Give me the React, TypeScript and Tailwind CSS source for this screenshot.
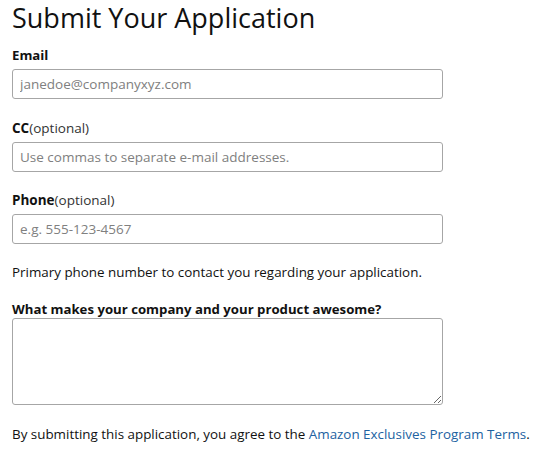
import React from "react";

const font = { fontFamily: '"Open Sans", "Liberation Sans", sans-serif' };

export default function App() {
  return (
    <div className="bg-white w-[543px] h-[452px] pl-[12px] text-[#111]" style={font}>
      <h1 className="text-[27px] leading-[36px] font-normal text-[#111] m-0">Submit Your Application</h1>
      <div className="w-[431px]">
        <label className="block mt-[9px] text-[13.2px] leading-[20px] font-bold">Email</label>
        <input
          className="block mt-[4px] w-full h-[30px] border border-[#a6a6a6] rounded-[3px] px-[7px] text-[13.5px] placeholder:text-[#808080] outline-none"
          placeholder="janedoe@companyxyz.com"
        />
        <label className="block mt-[19px] text-[13.5px] leading-[20px]">
          <span className="font-bold">CC</span>
          <span className="text-[#333]">(optional)</span>
        </label>
        <input
          className="block mt-[4px] w-full h-[30px] border border-[#a6a6a6] rounded-[3px] px-[7px] text-[13.5px] placeholder:text-[#808080] outline-none"
          placeholder="Use commas to separate e-mail addresses."
        />
        <label className="block mt-[18px] text-[13.5px] leading-[20px]">
          <span className="font-bold">Phone</span>
          <span className="text-[#333]">(optional)</span>
        </label>
        <input
          className="block mt-[4px] w-full h-[30px] border border-[#a6a6a6] rounded-[3px] px-[7px] text-[13.5px] placeholder:text-[#808080] outline-none"
          placeholder="e.g. 555-123-4567"
        />
        <p className="mt-[18px] text-[13.4px] leading-[20px] text-[#111]">
          Primary phone number to contact you regarding your application.
        </p>
        <label className="block mt-[18px] text-[13.2px] leading-[18px] font-bold">
          What makes your company and your product awesome?
        </label>
        <textarea className="block w-full h-[87px] border border-[#a6a6a6] rounded-[3px] px-[7px] text-[13.5px] outline-none" />
      </div>
      <p className="mt-[19px] text-[13.4px] leading-[20px] text-[#111]">
        By submitting this application, you agree to the{" "}
        <a className="text-[#2162a1]" href="#">Amazon Exclusives Program Terms</a>.
      </p>
    </div>
  );
}
